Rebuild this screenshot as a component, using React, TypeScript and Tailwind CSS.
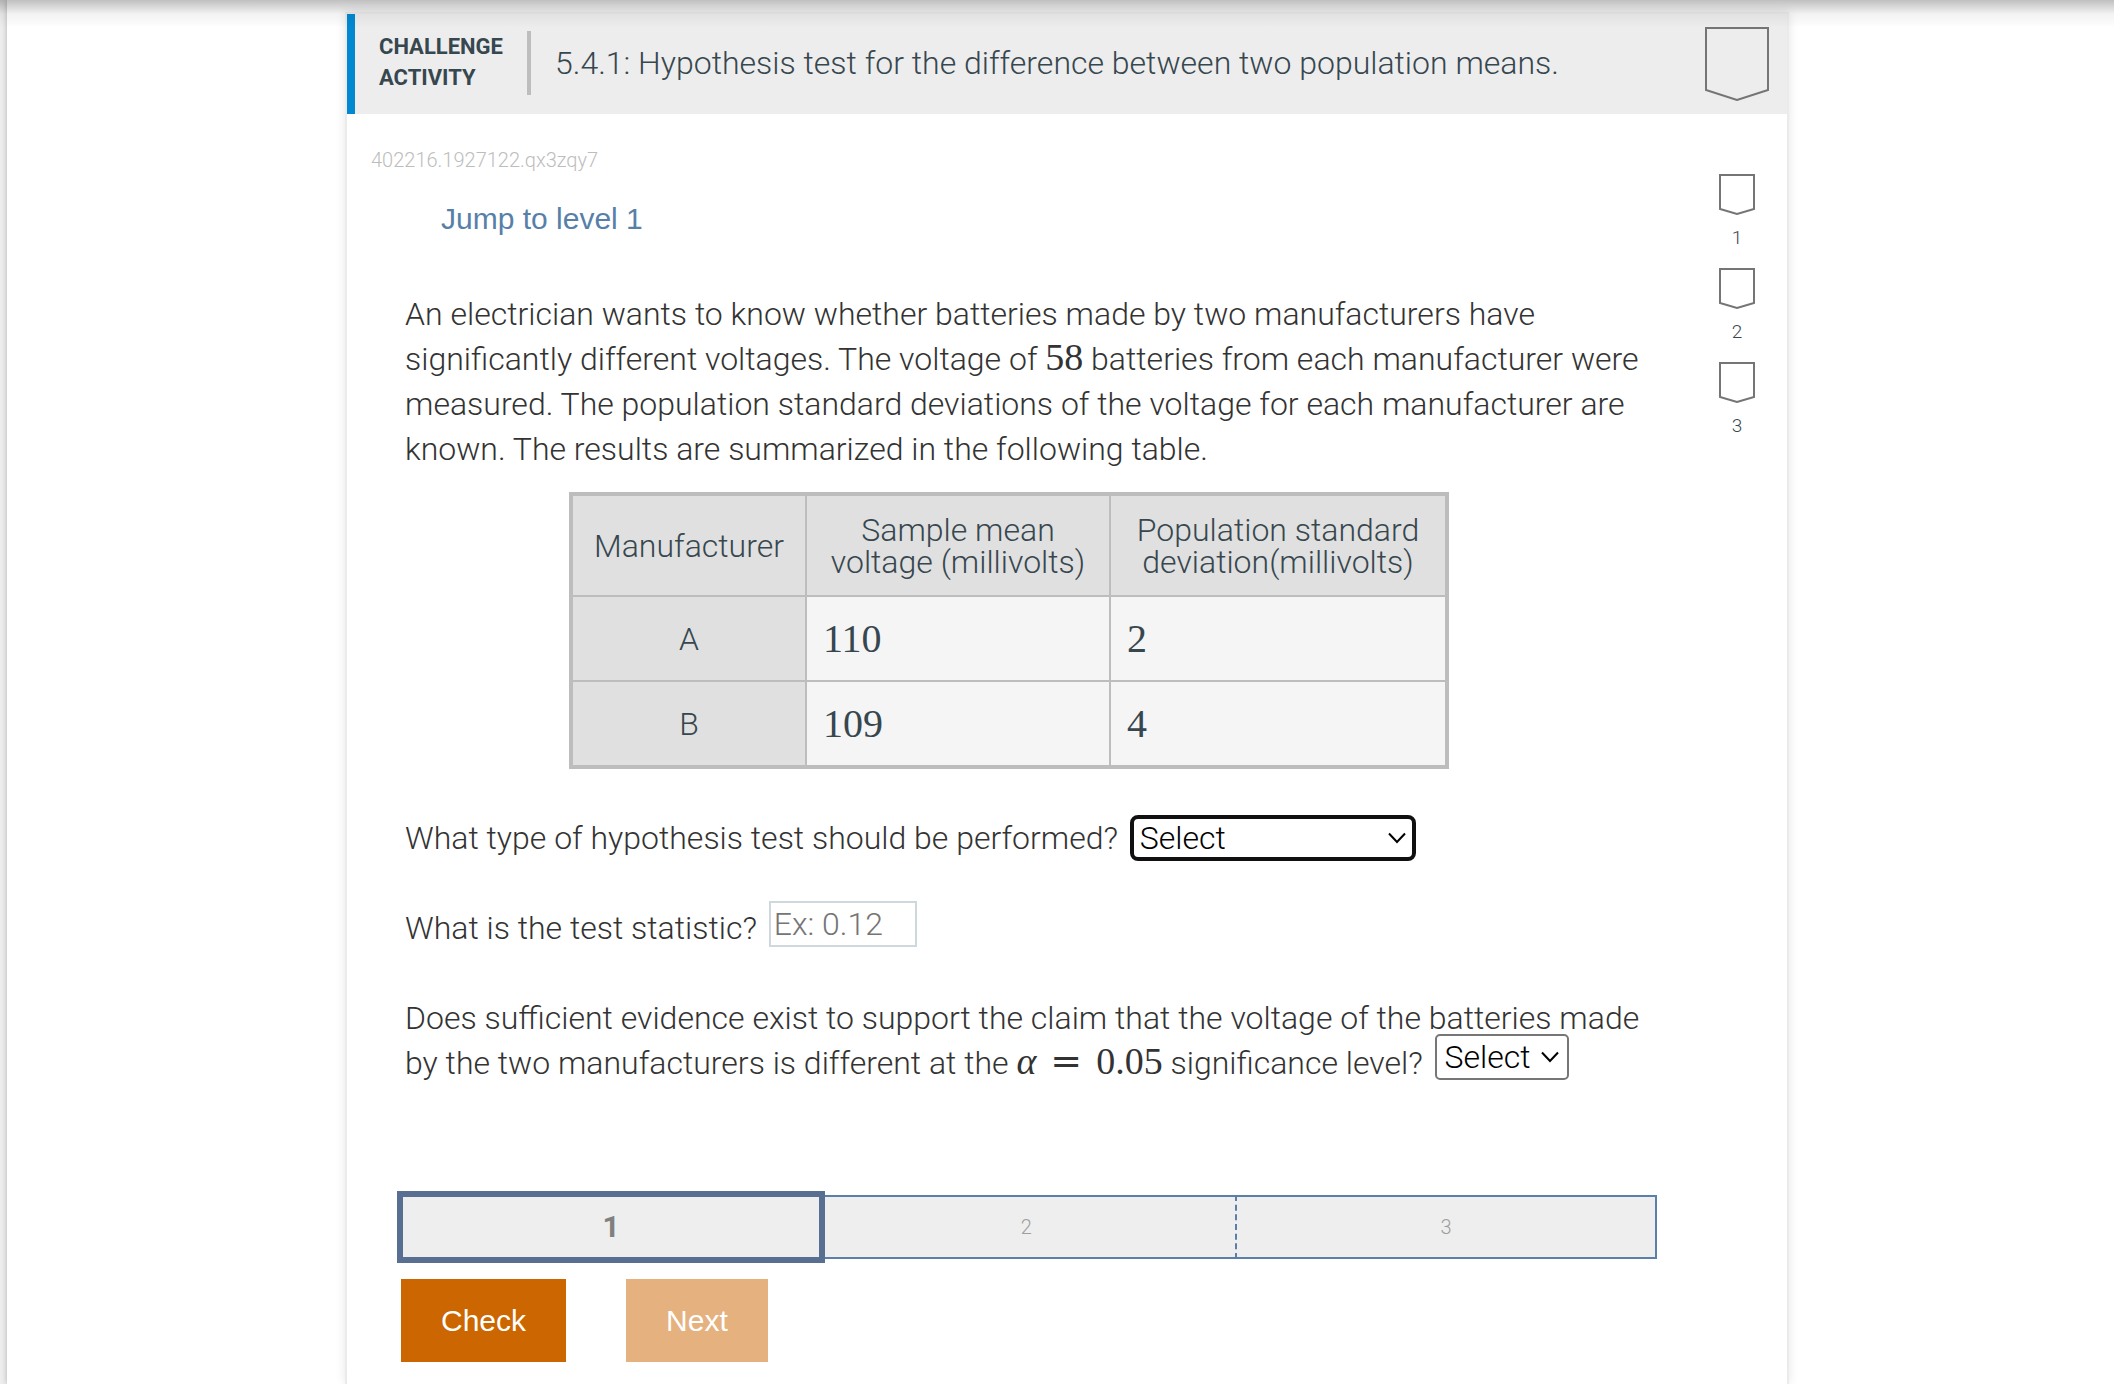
import type { ReactNode } from "react";

const ROBOTO = "font-[Roboto,sans-serif]";
const ARIAL = "font-['Liberation_Sans',Arial,sans-serif]";
const MATH = "font-['Liberation_Serif','Times_New_Roman',serif]";

interface ShieldProps {
	className: string;
	width: number;
	height: number;
	tip: number;
}

function Shield({ className, width, height, tip }: ShieldProps) {
	const right = width - 1;
	const bottom = height - 1;
	return (
		<svg
			viewBox={`0 0 ${width} ${height}`}
			className={className}
			fill="none"
			stroke="#757575"
			strokeWidth="2"
			aria-hidden="true"
		>
			<path
				d={`M1 1H${right}V${bottom - tip}L${width / 2} ${bottom}L1 ${bottom - tip}Z`}
			/>
		</svg>
	);
}

function MathText({ children }: { children: ReactNode }) {
	return (
		<span className={`${MATH} text-[38px] leading-none font-normal`}>
			{children}
		</span>
	);
}

interface DropdownProps {
	id: string;
	wrapper: string;
	box: string;
	options: string[];
}

function Dropdown({ id, wrapper, box, options }: DropdownProps) {
	return (
		<span className={`relative inline-block ${wrapper}`}>
			<select
				id={id}
				className={`h-[46px] w-full appearance-none bg-white text-[32px] leading-[38px] text-black outline-none ${box}`}
			>
				<option>Select</option>
				{options.map((option) => (
					<option key={option}>{option}</option>
				))}
			</select>
			<svg
				viewBox="0 0 18 12"
				className="pointer-events-none absolute top-[17px] right-[10px] h-3 w-[18px]"
				fill="none"
				stroke="#000"
				strokeWidth="2"
				aria-hidden="true"
			>
				<path d="M1 1.5L9 10L17 1.5" />
			</svg>
		</span>
	);
}

function ActivityHeader() {
	return (
		<header className="flex h-[100px] items-start border-l-8 border-[#0288d1] bg-[#ededed] pr-[18px]">
			<div className="mt-[17px] h-16 w-[176px] shrink-0 border-r-4 border-[#bdbdbd] pl-6 text-[22px] leading-[31px] font-bold text-[#37474f]">
				CHALLENGE
				<br />
				ACTIVITY
			</div>
			<h1 className="mt-[29px] flex-1 pl-6 text-[32px] leading-[40px] font-light text-[#37474f]">
				5.4.1: Hypothesis test for the difference between two population means.
			</h1>
			<Shield
				className="mt-[13px] h-[74px] w-16 shrink-0"
				width={64}
				height={74}
				tip={10}
			/>
		</header>
	);
}

function ResultsTable() {
	const rows = [
		{ name: "A", mean: 110, deviation: 2 },
		{ name: "B", mean: 109, deviation: 4 },
	];
	const head = "border-[#bdbdbd] bg-[#e0e0e0] text-center font-light";
	const cell = `${MATH} border-t-2 border-l-2 border-[#bdbdbd] bg-[#f5f5f5] pl-4 text-[40px] font-normal`;
	return (
		<table className="mt-5 ml-[164px] w-[880px] table-fixed border-separate border-spacing-0 border-4 border-[#bdbdbd] text-[32px] leading-8 text-[#37474f]">
			<colgroup>
				<col className="w-[232px]" />
				<col className="w-[304px]" />
				<col />
			</colgroup>
			<thead>
				<tr className="h-[99px]">
					<th scope="col" className={head}>
						Manufacturer
					</th>
					<th scope="col" className={`border-l-2 ${head}`}>
						Sample mean
						<br />
						voltage (millivolts)
					</th>
					<th scope="col" className={`border-l-2 ${head}`}>
						Population standard
						<br />
						deviation(millivolts)
					</th>
				</tr>
			</thead>
			<tbody>
				{rows.map((row) => (
					<tr key={row.name} className="h-[85px]">
						<th scope="row" className={`border-t-2 ${head}`}>
							{row.name}
						</th>
						<td className={cell}>{row.mean}</td>
						<td className={cell}>{row.deviation}</td>
					</tr>
				))}
			</tbody>
		</table>
	);
}

function Question() {
	return (
		<div className="mt-14 px-2 text-[32px] leading-[45px] font-light text-[#333]">
			<p>
				An electrician wants to know whether batteries made by two
				manufacturers have significantly different voltages. The voltage of{" "}
				<MathText>58</MathText> batteries from each manufacturer were measured.
				The population standard deviations of the voltage for each manufacturer
				are known. The results are summarized in the following table.
			</p>
			<ResultsTable />
			<p className="mt-[47px]">
				<label htmlFor="test-type">
					What type of hypothesis test should be performed?
				</label>{" "}
				<Dropdown
					id="test-type"
					wrapper="-my-2 ml-1 w-[286px]"
					box="rounded-lg border-4 border-[#101010] pl-[6px]"
					options={["z-test", "t-test", "Paired t-test"]}
				/>
			</p>
			<p className="mt-[45px]">
				<label htmlFor="statistic">What is the test statistic?</label>{" "}
				<input
					id="statistic"
					type="text"
					placeholder="Ex: 0.12"
					className="-my-2 ml-1 h-[46px] w-[148px] border-2 border-[#cfd8dc] pl-[3px] align-[4px] leading-[38px] placeholder:text-[#757575] outline-none"
				/>
			</p>
			<p className="mt-[45px]">
				<label htmlFor="evidence">
					Does sufficient evidence exist to support the claim that the voltage
					of the batteries made by the two manufacturers is different at the{" "}
					<MathText>
						<i>α</i>
						<span className="mx-3.5 font-['DejaVu_Serif',serif] font-light">
							=
						</span>
						0.05
					</MathText>{" "}
					significance level?
				</label>{" "}
				<Dropdown
					id="evidence"
					wrapper="-my-2 ml-1 w-[134px] align-[6px]"
					box="rounded-[5px] border-2 border-[#767676] pl-2"
					options={["Yes", "No"]}
				/>
			</p>
		</div>
	);
}

function StepBar() {
	const step =
		"h-16 flex-1 border-y-2 border-[#5b80a7] bg-[#eee] text-[20px] font-light text-[#9e9e9e]";
	return (
		<div className="mt-[105px] flex items-center">
			<button
				type="button"
				aria-current="step"
				className="relative z-10 -mr-2 h-[72px] w-[34%] border-6 border-[#586f92] bg-[#eee] text-[30px] leading-8 font-bold text-[#808080]"
			>
				1
			</button>
			<button type="button" className={step}>
				2
			</button>
			<button
				type="button"
				className={`${step} border-r-2 border-l-2 [border-left-style:dashed]`}
			>
				3
			</button>
		</div>
	);
}

function Levels() {
	return (
		<aside className="flex w-[100px] shrink-0 flex-col items-center gap-[18px] pt-[60px]">
			{[1, 2, 3].map((level) => (
				<div key={level} className="flex flex-col items-center gap-[11px]">
					<Shield className="h-[41px] w-9" width={36} height={41} tip={5} />
					<span className="text-[19px] leading-6 font-light text-[#37474f]">
						{level}
					</span>
				</div>
			))}
		</aside>
	);
}

export default function App() {
	return (
		<div className={`${ROBOTO} relative min-h-screen bg-[#eee] pl-[7px]`}>
			<div className="min-h-screen bg-white pt-3 pl-[13px] shadow-[0_0_6px_rgba(0,0,0,0.25)]">
				<div className="mx-auto min-h-[calc(100vh-12px)] max-w-[1444px] border-2 border-b-0 border-[#ebebeb] shadow-[0_0_10px_rgba(0,0,0,0.1)]">
					<ActivityHeader />
					<div className="flex">
						<main className="flex-1 pr-[30px] pb-[22px] pl-[50px]">
							<p className="-ml-[26px] pt-[34px] text-[20px] leading-6 font-light text-[#bdbdbd]">
								402216.1927122.qx3zqy7
							</p>
							<button
								type="button"
								className={`${ARIAL} mt-[30px] ml-11 block text-[30px] leading-[34px] text-[#5780a8]`}
							>
								Jump to level 1
							</button>
							<Question />
							<StepBar />
							<div
								className={`${ARIAL} mt-4 ml-1 flex gap-[60px] text-[30px] text-white`}
							>
								<button type="button" className="h-[83px] bg-[#c60] px-10">
									Check
								</button>
								<button
									type="button"
									disabled
									className="h-[83px] bg-[#e5b17f] px-10"
								>
									Next
								</button>
							</div>
						</main>
						<Levels />
					</div>
				</div>
			</div>
			<div className="pointer-events-none absolute inset-x-0 top-0 z-20 h-7 bg-linear-to-b from-black/25 via-black/5 to-transparent" />
		</div>
	);
}
